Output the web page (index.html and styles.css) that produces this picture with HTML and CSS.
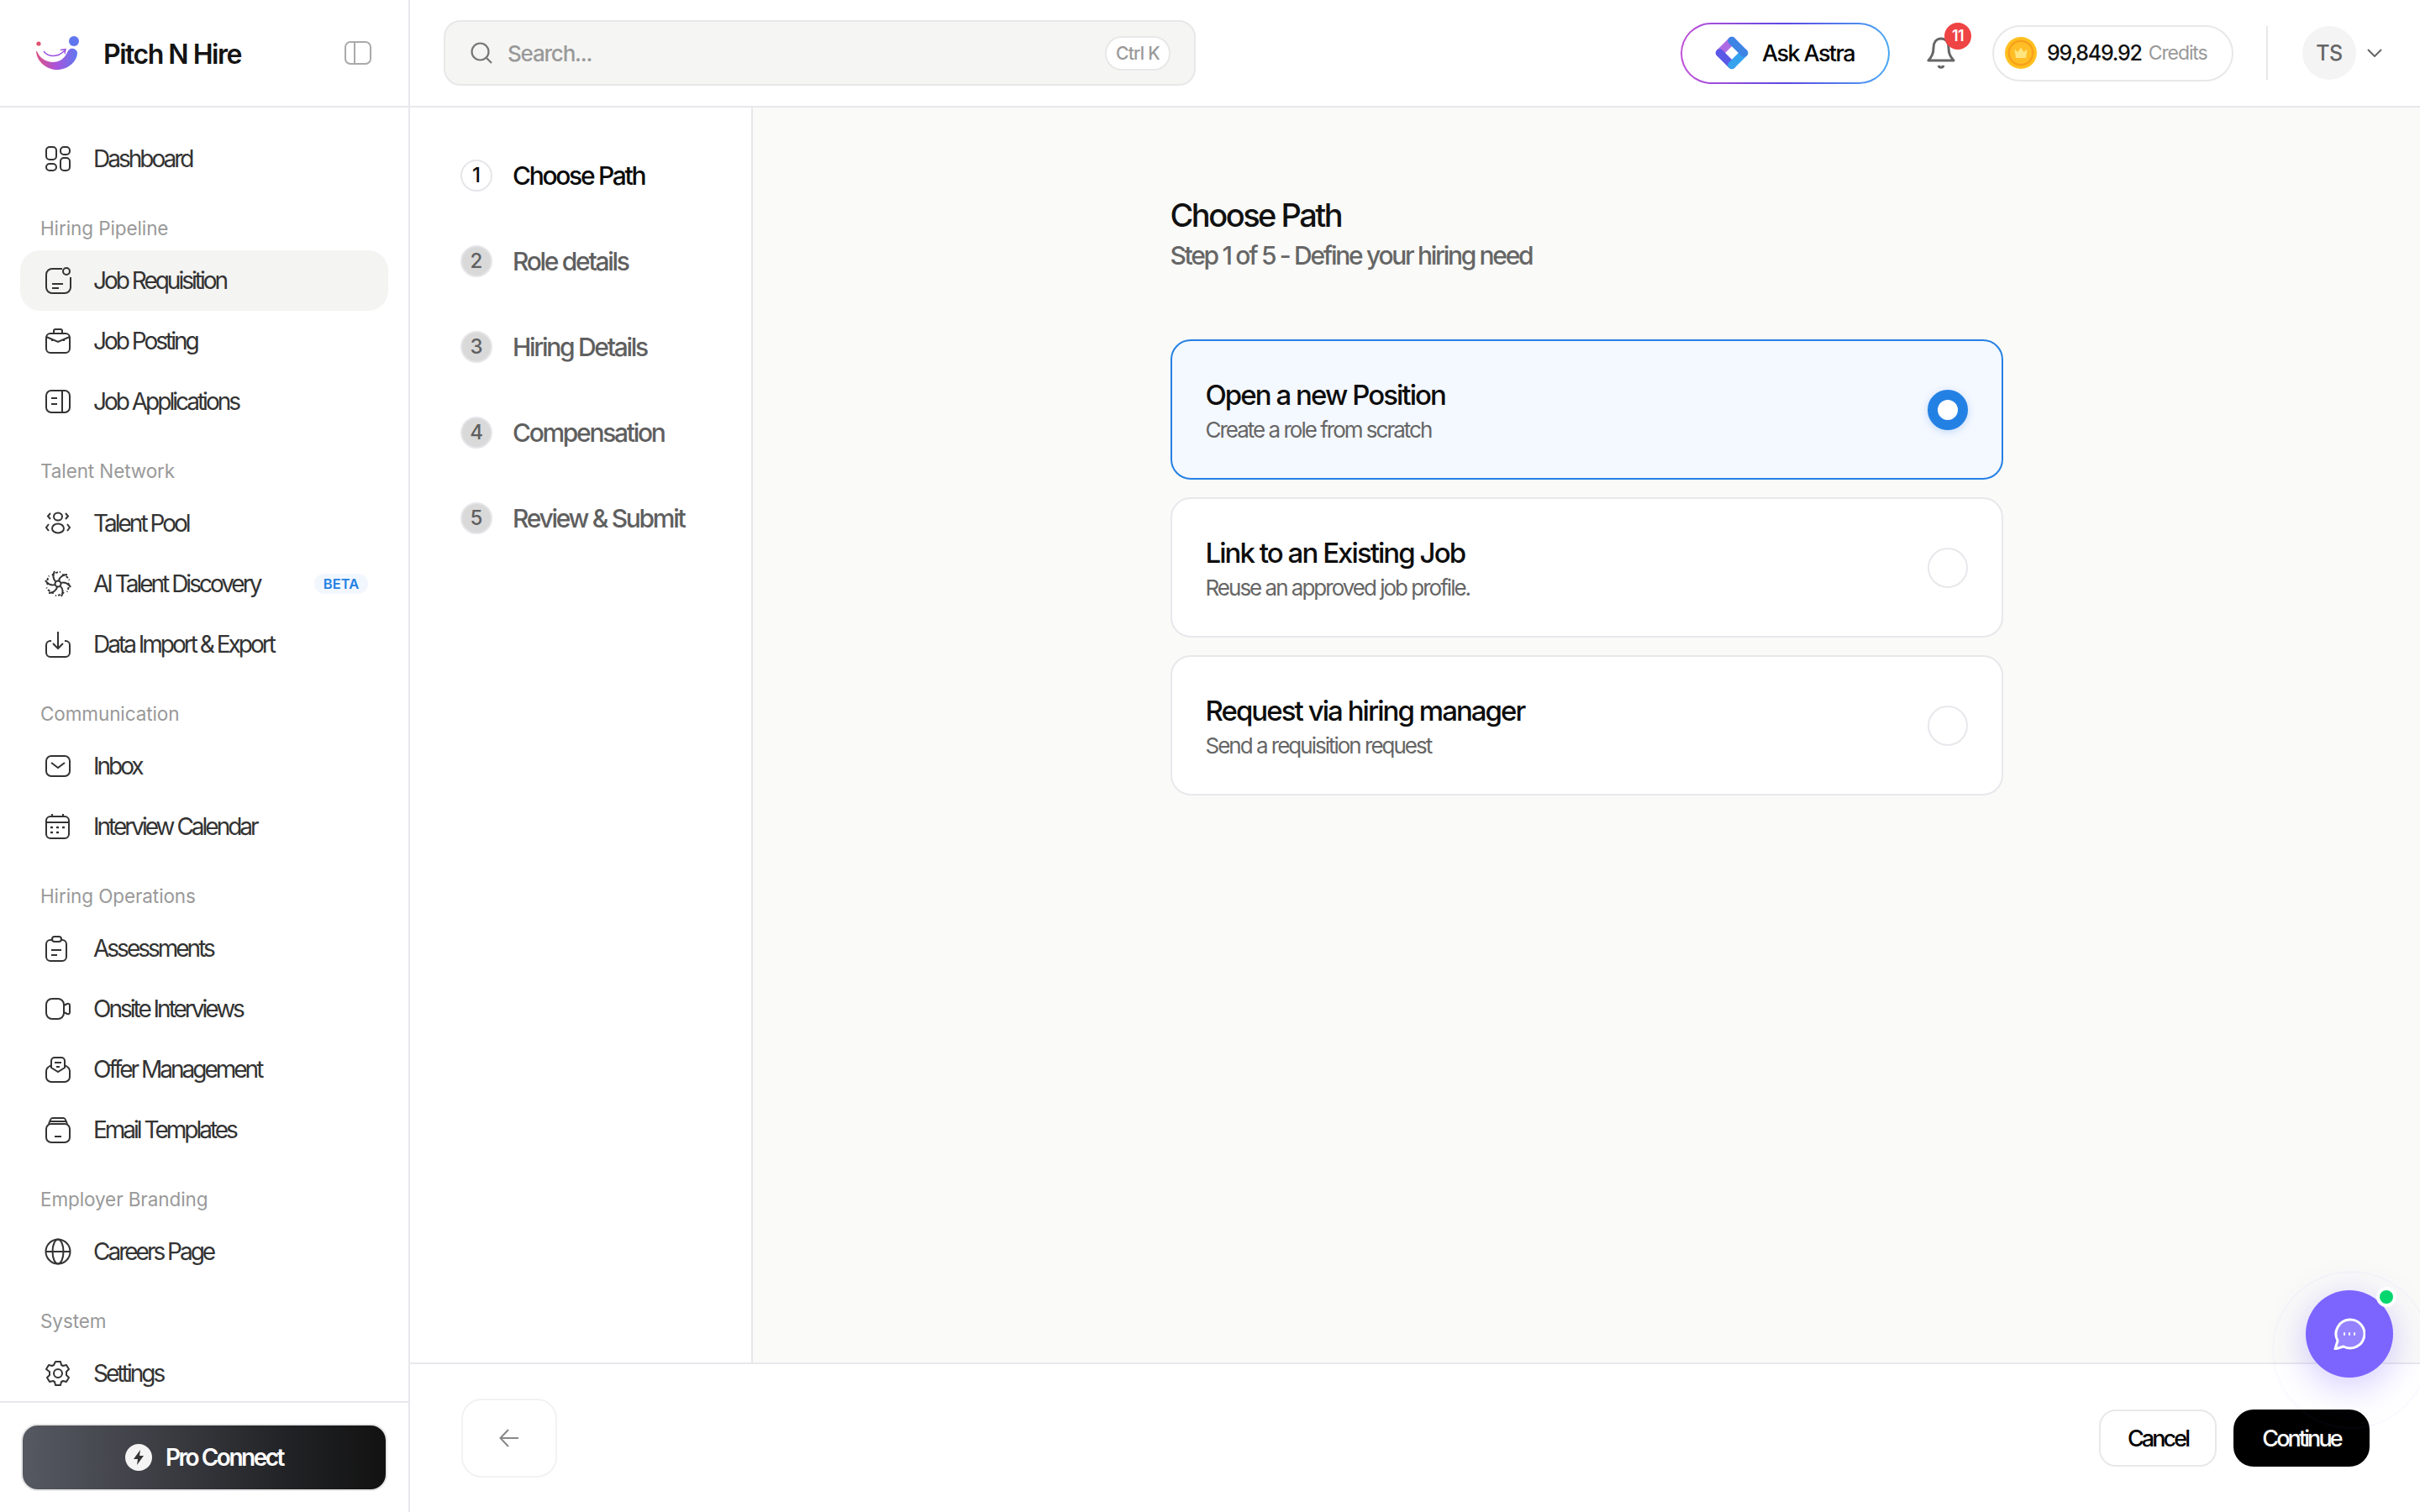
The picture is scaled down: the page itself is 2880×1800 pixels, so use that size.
FILE: index.html
```html
<!DOCTYPE html>
<html lang="en">
<head>
    <meta charset="UTF-8">
    <meta name="viewport" content="width=device-width, initial-scale=1.0">
    <title>Job Requisition - Pitch N Hire</title>
    <link rel="stylesheet" href="styles.css">
</head>
<body>
    <aside class="sidebar">
        <div class="brand">
            <svg class="logo" viewBox="0 0 52 40">
                <defs>
                    <linearGradient id="logo-grad" x1="0" y1="0" x2="1" y2="0">
                        <stop offset="0" stop-color="#dc5085"/>
                        <stop offset="0.5" stop-color="#a855dc"/>
                        <stop offset="1" stop-color="#5f78f0"/>
                    </linearGradient>
                </defs>
                <path d="M0 18C1 32 14 40 25 40C38 40 49 30 49 20C49 16 44 14 41 15C38 16 37 20 35 23C32 28 26 31 20 31C12 31 4 26 1 18Z" fill="url(#logo-grad)"/>
                <circle cx="45" cy="6" r="6" fill="#5f76ee"/>
                <circle cx="3" cy="9" r="2.6" fill="#e0506e"/>
                <path d="M9 18C14 25 26 26 34 17M29 16.5L35 15.5L34 21" fill="none" stroke="#9b4fe0" stroke-width="1.4"/>
            </svg>
            <span class="brand-name">Pitch N Hire</span>
            <svg class="collapse" viewBox="0 0 32 28" fill="none" stroke="#aaa" stroke-width="2">
                <rect x="1" y="1" width="30" height="26" rx="6"/>
                <path d="M12 1V27"/>
            </svg>
        </div>

        <nav class="nav">
            <a class="nav-item first">
                <svg class="icon" viewBox="0 0 32 32"><rect x="2" y="2" width="12" height="15" rx="4"/><rect x="19" y="2" width="11" height="9" rx="4"/><rect x="2" y="22" width="12" height="8" rx="4"/><rect x="19" y="15" width="11" height="15" rx="4"/></svg>
                Dashboard
            </a>

            <div class="nav-label">Hiring Pipeline</div>
            <a class="nav-item active">
                <svg class="icon" viewBox="0 0 32 32"><path d="M21 2H9a7 7 0 0 0-7 7v15a7 7 0 0 0 7 7h15a7 7 0 0 0 7-7V12"/><circle cx="26" cy="5" r="4"/><path d="M9 20H22M9 25H17"/></svg>
                Job Requisition
            </a>
            <a class="nav-item">
                <svg class="icon" viewBox="0 0 32 32"><rect x="2" y="7" width="28" height="23" rx="5"/><path d="M11 7V4a2 2 0 0 1 2-2h6a2 2 0 0 1 2 2v3M2 11l14 6 14-6M9 14v2M23 14v2"/></svg>
                Job Posting
            </a>
            <a class="nav-item">
                <svg class="icon" viewBox="0 0 32 32"><rect x="2" y="3" width="28" height="26" rx="6"/><path d="M21 3V29M8 12H15M8 19H15"/></svg>
                Job Applications
            </a>

            <div class="nav-label">Talent Network</div>
            <a class="nav-item">
                <svg class="icon" viewBox="0 0 32 32"><ellipse cx="16" cy="8" rx="5" ry="4.5"/><ellipse cx="16" cy="22" rx="7" ry="5.5"/><path d="M7 4L4 7.5L7 11M25 4L28 7.5L25 11M5 17L2 21L5 25M27 17L30 21L27 25"/></svg>
                Talent Pool
            </a>
            <a class="nav-item">
                <svg class="icon" viewBox="0 0 32 32">
                    <circle cx="16" cy="16" r="3.5"/>
                    <g id="swirl"><path d="M17 12C18 8 22 5 27 5"/><path d="M9 6C11 3.5 15 2 19 2" stroke-dasharray="3 2"/></g>
                    <use href="#swirl" transform="rotate(60 16 16)"/>
                    <use href="#swirl" transform="rotate(120 16 16)"/>
                    <use href="#swirl" transform="rotate(180 16 16)"/>
                    <use href="#swirl" transform="rotate(240 16 16)"/>
                    <use href="#swirl" transform="rotate(300 16 16)"/>
                </svg>
                AI Talent Discovery
                <span class="beta">BETA</span>
            </a>
            <a class="nav-item">
                <svg class="icon" viewBox="0 0 32 32"><path d="M8 12H7a5 5 0 0 0-5 5v9a5 5 0 0 0 5 5h18a5 5 0 0 0 5-5v-9a5 5 0 0 0-5-5h-1M16 1V21M10 15l6 6 6-6"/></svg>
                Data Import &amp; Export
            </a>

            <div class="nav-label">Communication</div>
            <a class="nav-item">
                <svg class="icon" viewBox="0 0 32 32"><rect x="2" y="4" width="28" height="24" rx="6"/><path d="M8 12l8 6 8-6"/></svg>
                Inbox
            </a>
            <a class="nav-item">
                <svg class="icon" viewBox="0 0 32 32"><rect x="2" y="4" width="27" height="26" rx="5"/><path d="M2 11H29M9 1V5M22 1V5"/><path class="dots" d="M8 17h1M15 17h1M22 17h1M8 23h1M15 23h1"/></svg>
                Interview Calendar
            </a>

            <div class="nav-label">Hiring Operations</div>
            <a class="nav-item">
                <svg class="icon" viewBox="0 0 32 32"><path d="M9 6H7a5 5 0 0 0-5 5v15a5 5 0 0 0 5 5h14a5 5 0 0 0 5-5V11a5 5 0 0 0-5-5h-2"/><rect x="9" y="2" width="11" height="6" rx="3"/><path d="M8 18H20M8 24H15"/></svg>
                Assessments
            </a>
            <a class="nav-item">
                <svg class="icon" viewBox="0 0 32 32"><rect x="2" y="4" width="21" height="24" rx="7"/><path d="M23 12l4-2a2 2 0 0 1 3 2v8a2 2 0 0 1-3 2l-4-2"/></svg>
                Onsite Interviews
            </a>
            <a class="nav-item">
                <svg class="icon" viewBox="0 0 32 32"><path d="M8 11l-3 2a6 6 0 0 0-3 5v7a6 6 0 0 0 6 6h16a6 6 0 0 0 6-6v-7a6 6 0 0 0-3-5l-3-2"/><path d="M8 14V6a4 4 0 0 1 4-4h8a4 4 0 0 1 4 4v8l-8 5z"/><path d="M12 8H20M14 13H18"/></svg>
                Offer Management
            </a>
            <a class="nav-item">
                <svg class="icon" viewBox="0 0 32 32"><rect x="2" y="9" width="28" height="22" rx="6"/><path d="M5 9l2-5a3 3 0 0 1 3-2h12a3 3 0 0 1 3 2l2 5M7 6H25M12 24H20"/></svg>
                Email Templates
            </a>

            <div class="nav-label">Employer Branding</div>
            <a class="nav-item">
                <svg class="icon" viewBox="0 0 32 32"><circle cx="16" cy="16" r="14.5"/><ellipse cx="16" cy="16" rx="6.5" ry="14.5"/><path d="M2 16H30"/></svg>
                Careers Page
            </a>

            <div class="nav-label">System</div>
            <a class="nav-item">
                <svg class="icon" viewBox="0 0 32 32"><circle cx="16" cy="16" r="5"/><path d="M13 2h6l1 4 2 1 4-1 3 5-3 3v4l3 3-3 5-4-1-2 1-1 4h-6l-1-4-2-1-4 1-3-5 3-3v-4L2 11l3-5 4 1 2-1z" stroke-linejoin="round"/></svg>
                Settings
            </a>
        </nav>

        <div class="pro-box">
            <button class="pro-btn">
                <svg class="pro-icon" viewBox="0 0 32 32"><circle cx="16" cy="16" r="16" fill="#f4f4f4"/><path d="M18 7L10 18h5l-1 7 8-11h-5z" fill="#333"/></svg>
                Pro Connect
            </button>
        </div>
    </aside>

    <div class="page">
        <header class="topbar">
            <div class="search">
                <svg class="search-icon" viewBox="0 0 26 26" fill="none" stroke="#777" stroke-width="2.2"><circle cx="11.5" cy="11.5" r="10"/><path d="M19 19L25 25"/></svg>
                <span class="search-text">Search...</span>
                <span class="kbd">Ctrl K</span>
            </div>

            <div class="top-right">
                <button class="astra">
                    <svg class="astra-icon" viewBox="0 0 40 40" fill="none" stroke-width="9.5" stroke-linecap="round">
                        <path d="M20 5.5L5.5 20" stroke="#ae6ae4"/>
                        <path d="M5.5 20L20 34.5" stroke="#5a58e6"/>
                        <path d="M20 34.5L34.5 20" stroke="#35a2ee"/>
                        <path d="M34.5 20L20 5.5" stroke="#3d84e4"/>
                    </svg>
                    Ask Astra
                </button>

                <div class="bell">
                    <svg viewBox="0 0 34 38" fill="none" stroke="#666" stroke-width="3"><path d="M17 2C11 2 8 7 8 13C8 20 6 23 2 28H32C28 23 26 20 26 13C26 7 23 2 17 2Z" stroke-linejoin="round"/><path d="M14 34C15 37 19 37 20 34"/></svg>
                    <span class="badge">11</span>
                </div>

                <div class="credits">
                    <svg class="coin" viewBox="0 0 38 38">
                        <circle cx="19" cy="19" r="19" fill="#ffc01f"/>
                        <circle cx="19" cy="19" r="15.5" fill="#f9a01b"/>
                        <circle cx="19" cy="19" r="13" fill="#ffbe26"/>
                        <path d="M11.5 14.5L15.5 18L19 12.5L22.5 18L26.5 14.5L25 25H13Z" fill="#ffe680"/>
                    </svg>
                    <span class="credits-num">99,849.92</span>
                    <span class="credits-label">Credits</span>
                </div>

                <span class="divider"></span>
                <span class="avatar">TS</span>
                <svg class="chevron" viewBox="0 0 18 10" fill="none" stroke="#666" stroke-width="2"><path d="M1 1L9 9L17 1"/></svg>
            </div>
        </header>

        <div class="content">
            <div class="stepper">
                <div class="step current"><span class="step-num">1</span>Choose Path</div>
                <div class="step"><span class="step-num">2</span>Role details</div>
                <div class="step"><span class="step-num">3</span>Hiring Details</div>
                <div class="step"><span class="step-num">4</span>Compensation</div>
                <div class="step"><span class="step-num">5</span>Review &amp; Submit</div>
            </div>

            <div class="panel">
                <div class="panel-inner">
                    <h1>Choose Path</h1>
                    <p class="panel-sub">Step 1 of 5 - Define your hiring need</p>

                    <div class="options">
                        <div class="option selected">
                            <div>
                                <div class="option-title">Open a new Position</div>
                                <div class="option-sub">Create a role from scratch</div>
                            </div>
                            <span class="radio"></span>
                        </div>
                        <div class="option">
                            <div>
                                <div class="option-title">Link to an Existing Job</div>
                                <div class="option-sub">Reuse an approved job profile.</div>
                            </div>
                            <span class="radio"></span>
                        </div>
                        <div class="option">
                            <div>
                                <div class="option-title">Request via hiring manager</div>
                                <div class="option-sub">Send a requisition request</div>
                            </div>
                            <span class="radio"></span>
                        </div>
                    </div>
                </div>
            </div>
        </div>

        <footer class="footer">
            <button class="back">
                <svg viewBox="0 0 24 24" fill="none" stroke="#888" stroke-width="2"><path d="M23 12H2M11 2L1.5 12L11 22"/></svg>
            </button>
            <div class="actions">
                <button class="btn">Cancel</button>
                <button class="btn primary">Continue</button>
            </div>
        </footer>
    </div>

    <div class="chat">
        <svg viewBox="0 0 38 38" fill="none"><path d="M19 2A17 17 0 1 1 12 34L2 37L5 27A17 17 0 0 1 19 2Z" fill="#9482ff" stroke="#fff" stroke-width="3" stroke-linejoin="round"/><path d="M12 19h2M18 19h2M24 19h2" stroke="#fff" stroke-width="3.4"/></svg>
        <span class="chat-dot"></span>
    </div>
</body>
</html>
```
FILE: styles.css
```css
* {
    box-sizing: border-box;
}

body {
    margin: 0;
    height: 100vh;
    display: flex;
    overflow: hidden;
    font-family: Inter, "Liberation Sans", sans-serif;
    color: #111;
    background: #fff;
}

button {
    font-family: inherit;
    cursor: pointer;
}

/* sidebar */
.sidebar {
    width: 488px;
    flex-shrink: 0;
    display: flex;
    flex-direction: column;
    border-right: 2px solid #e8e8ec;
}

.brand {
    height: 128px;
    flex-shrink: 0;
    display: flex;
    align-items: center;
    padding: 2px 0 0 43px;
    border-bottom: 2px solid #e8e8ec;
}

.logo {
    width: 52px;
    height: 40px;
    margin-top: -2px;
}

.brand-name {
    margin-left: 28px;
    font-size: 32px;
    font-weight: 600;
    letter-spacing: -1.5px;
    color: #141414;
}

.collapse {
    width: 32px;
    height: 28px;
    margin-left: auto;
    margin-right: 44px;
    margin-top: -2px;
}

.nav {
    flex: 1;
    overflow: hidden;
    padding: 25px 24px 0;
}

.nav-label {
    height: 40px;
    margin: 27px 0 6px 24px;
    font-size: 22.5px;
    line-height: 40px;
    letter-spacing: -0.1px;
    color: #999;
}

.nav-item {
    height: 72px;
    display: flex;
    align-items: center;
    padding-left: 29px;
    border-radius: 24px;
    font-size: 28px;
    letter-spacing: -3px;
    color: #333;
}

.nav-item.active {
    background: #f4f4f2;
}

.icon {
    width: 32px;
    height: 32px;
    margin-right: 26px;
    flex-shrink: 0;
    fill: none;
    stroke: #333;
    stroke-width: 2;
}

.icon .dots {
    stroke-linecap: round;
    stroke-width: 2.4;
}

.beta {
    margin-left: auto;
    margin-right: 24px;
    width: 64px;
    height: 24px;
    line-height: 24px;
    text-align: center;
    border-radius: 12px;
    background: #f2f7fe;
    color: #2481e4;
    font-size: 16.5px;
    font-weight: 600;
    letter-spacing: 0;
}

.pro-box {
    height: 132px;
    flex-shrink: 0;
    padding: 25px 25px 0;
    border-top: 2px solid #e8e8ec;
}

.pro-btn {
    width: 436px;
    height: 80px;
    display: flex;
    align-items: center;
    justify-content: center;
    gap: 16px;
    border: 2px solid #e6e6e6;
    border-radius: 20px;
    background: linear-gradient(90deg, #565962 0%, #3b3c42 40%, #222326 72%, #121212 100%);
    color: #fff;
    font-size: 28px;
    font-weight: 600;
    letter-spacing: -2.5px;
}

.pro-icon {
    width: 32px;
    height: 32px;
}

/* top bar */
.page {
    flex: 1;
    min-width: 0;
    display: flex;
    flex-direction: column;
}

.topbar {
    height: 128px;
    flex-shrink: 0;
    display: flex;
    align-items: center;
    padding: 0 45px 0 40px;
    border-bottom: 2px solid #e8e8ec;
}

.search {
    width: 895px;
    height: 78px;
    display: flex;
    align-items: center;
    padding: 0 28px 0 30px;
    border: 2px solid #e8e8e8;
    border-radius: 20px;
    background: #f5f5f4;
}

.search-icon {
    width: 26px;
    height: 26px;
}

.search-text {
    margin-left: 18px;
    font-size: 26px;
    font-weight: 500;
    letter-spacing: -1.2px;
    color: #999;
}

.kbd {
    margin-left: auto;
    height: 41px;
    width: 78px;
    text-align: center;
    line-height: 37px;
    border: 2px solid #e8e8e8;
    border-radius: 20px;
    background: #fff;
    font-size: 21px;
    font-weight: 500;
    letter-spacing: -0.7px;
    color: #999;
}

.top-right {
    margin-left: auto;
    display: flex;
    align-items: center;
}

.astra {
    width: 249px;
    height: 73px;
    display: flex;
    align-items: center;
    gap: 16px;
    padding: 0 0 0 39px;
    border: 2px solid transparent;
    border-radius: 37px;
    background: linear-gradient(#fff, #fff) padding-box, linear-gradient(90deg, #c050d8, #5c48e0 50%, #4aa8f5) border-box;
    font-size: 27px;
    font-weight: 500;
    letter-spacing: -1.6px;
    color: #000;
}

.astra-icon {
    width: 40px;
    height: 40px;
}

.bell {
    position: relative;
    width: 34px;
    height: 38px;
    margin: 0 44px;
}

.bell svg {
    display: block;
    width: 34px;
    height: 38px;
}

.badge {
    position: absolute;
    top: -17px;
    left: 21px;
    width: 32px;
    height: 32px;
    border-radius: 50%;
    background: #ef4444;
    color: #fff;
    text-align: center;
    font-size: 18px;
    font-weight: 600;
    line-height: 32px;
    letter-spacing: -0.5px;
}

.credits {
    width: 287px;
    height: 67px;
    display: flex;
    align-items: center;
    padding-left: 13px;
    border: 2px solid #e8e8e8;
    border-radius: 34px;
}

.coin {
    width: 38px;
    height: 38px;
}

.credits-num {
    margin-left: 12px;
    font-size: 25px;
    font-weight: 500;
    letter-spacing: -1.2px;
    color: #111;
}

.credits-label {
    margin-left: 8px;
    font-size: 23px;
    letter-spacing: -1.1px;
    color: #999;
}

.divider {
    width: 2px;
    height: 64px;
    margin: 0 41px 0 39px;
    background: #e8e8e8;
}

.avatar {
    width: 64px;
    height: 64px;
    border-radius: 50%;
    background: #f4f4f4;
    text-align: center;
    line-height: 64px;
    font-size: 25px;
    font-weight: 500;
    letter-spacing: -0.5px;
    color: #666;
}

.chevron {
    width: 18px;
    height: 10px;
    margin-left: 13px;
}

/* stepper */
.content {
    flex: 1;
    min-height: 0;
    display: flex;
}

.stepper {
    width: 408px;
    flex-shrink: 0;
    padding: 62px 0 0 60px;
    border-right: 2px solid #e8e8ec;
    display: flex;
    flex-direction: column;
    gap: 64px;
}

.step {
    height: 38px;
    display: flex;
    align-items: center;
    gap: 24px;
    font-size: 30px;
    font-weight: 500;
    letter-spacing: -2.3px;
    color: #5f5f5f;
}

.step.current {
    color: #0a0a0a;
}

.step-num {
    width: 38px;
    height: 38px;
    flex-shrink: 0;
    border: 2px solid #e6e6ea;
    border-radius: 50%;
    background: #d9d9d9;
    text-align: center;
    line-height: 33px;
    font-size: 24px;
    letter-spacing: 0;
}

.current .step-num {
    background: #fff;
}

/* main panel */
.panel {
    flex: 1;
    background: #fafaf8;
}

.panel-inner {
    width: 991px;
    margin: 0 auto;
    padding-top: 104px;
}

h1 {
    margin: 0;
    font-size: 38px;
    line-height: 48px;
    font-weight: 500;
    letter-spacing: -2.5px;
    color: #111;
}

.panel-sub {
    margin: 4px 0 0;
    font-size: 30px;
    line-height: 40px;
    font-weight: 500;
    letter-spacing: -2.3px;
    color: #666;
}

.options {
    margin-top: 80px;
    display: flex;
    flex-direction: column;
    gap: 21px;
}

.option {
    height: 167px;
    display: flex;
    align-items: center;
    justify-content: space-between;
    padding: 2px 40px 0;
    border: 2px solid #e8e8ec;
    border-radius: 24px;
    background: #fff;
}

.option.selected {
    border-color: #2481e4;
    background: #f4f8ff;
}

.option-title {
    font-size: 33px;
    line-height: 44px;
    font-weight: 500;
    letter-spacing: -1.95px;
    color: #0d0d0d;
}

.option-sub {
    margin-top: 2px;
    font-size: 26px;
    line-height: 36px;
    letter-spacing: -2px;
    color: #666;
}

.radio {
    width: 48px;
    height: 48px;
    margin-top: -2px;
    border: 2px solid #e8e8ec;
    border-radius: 50%;
    background: #fff;
}

.selected .radio {
    border: 12px solid #2481e4;
    box-shadow: 0 2px 8px rgba(36, 129, 228, 0.25);
}

/* footer */
.footer {
    height: 178px;
    flex-shrink: 0;
    display: flex;
    align-items: center;
    justify-content: space-between;
    padding: 0 60px 0 61px;
    border-top: 2px solid #e8e8ec;
}

.back {
    width: 114px;
    height: 94px;
    display: flex;
    align-items: center;
    justify-content: center;
    border: 2px solid #f2f2f4;
    border-radius: 24px;
    background: #fff;
}

.back svg {
    width: 24px;
    height: 24px;
}

.actions {
    display: flex;
    gap: 20px;
}

.btn {
    width: 140px;
    height: 68px;
    padding: 0;
    border: 2px solid #e8e8e8;
    border-radius: 20px;
    background: #fff;
    color: #000;
    font-size: 27px;
    font-weight: 500;
    letter-spacing: -2.9px;
}

.btn.primary {
    width: 162px;
    border-color: #000;
    background: #000;
    color: #fff;
    border-radius: 24px;
}

/* chat bubble */
.chat {
    position: fixed;
    right: 32px;
    bottom: 160px;
    width: 104px;
    height: 104px;
    display: flex;
    align-items: center;
    justify-content: center;
    border-radius: 50%;
    background: #7c64ff;
    box-shadow: 0 10px 44px rgba(124, 100, 255, 0.35);
}

.chat::before {
    content: "";
    position: absolute;
    left: -40px;
    top: -23px;
    width: 184px;
    height: 184px;
    border: 2px solid rgba(124, 100, 255, 0.04);
    border-radius: 50%;
}

.chat svg {
    position: relative;
    width: 38px;
    height: 38px;
}

.chat-dot {
    position: absolute;
    top: -4px;
    right: -4px;
    width: 24px;
    height: 24px;
    border: 4px solid #fff;
    border-radius: 50%;
    background: #06d66e;
}
```
